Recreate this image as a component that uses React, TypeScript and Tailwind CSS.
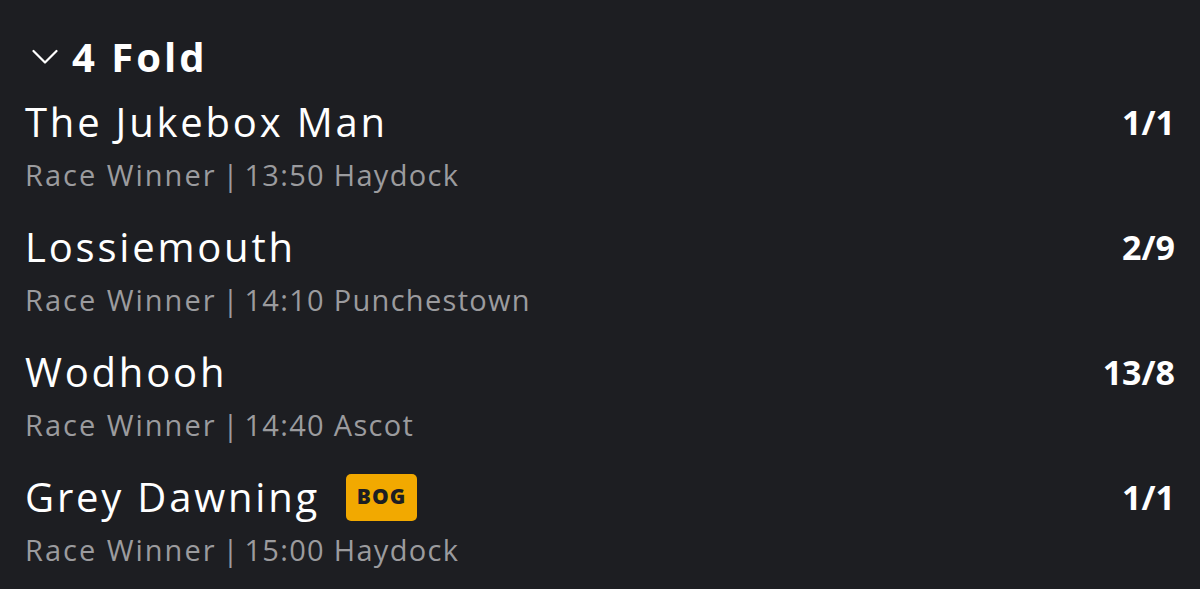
const legs = [
  { name: 'The Jukebox Man', market: 'Race Winner', event: '13:50 Haydock', odds: '1/1' },
  { name: 'Lossiemouth', market: 'Race Winner', event: '14:10 Punchestown', odds: '2/9' },
  { name: 'Wodhooh', market: 'Race Winner', event: '14:40 Ascot', odds: '13/8' },
  { name: 'Grey Dawning', market: 'Race Winner', event: '15:00 Haydock', odds: '1/1', bog: true },
];

function Chevron() {
  return (
    <svg width="26" height="16" viewBox="0 0 26 16" fill="none" className="shrink-0">
      <path d="M1.5 2 L13 13.5 L24.5 2" stroke="#ffffff" strokeWidth="2.2" strokeLinecap="round" strokeLinejoin="round" />
    </svg>
  );
}

export default function App() {
  return (
    <div
      className="w-[1200px] h-[589px] overflow-hidden bg-[#1d1e22] text-white pl-[25px] pr-[25px] pt-[32px]"
      style={{ fontFamily: '"Open Sans", "Liberation Sans", sans-serif' }}
    >
      <div className="flex items-center gap-[14px] h-[50px] pl-[7px]">
        <Chevron />
        <span className="text-[40px] font-bold leading-none tracking-[3px]">4 Fold</span>
      </div>

      <div className="flex flex-col">
        {legs.map((leg) => (
          <div key={leg.name} className="h-[125px] pt-[16px]">
            <div className="flex items-center justify-between h-[48px]">
              <div className="flex items-center gap-[26px]">
                <span className="text-[40px] leading-none tracking-[2.8px]">{leg.name}</span>
                {leg.bog && (
                  <span className="bg-[#f2a900] text-[#1d1e22] text-[21px] font-extrabold tracking-[1px] rounded-[5px] w-[71px] h-[47px] flex items-center justify-center">
                    BOG
                  </span>
                )}
              </div>
              <span className="text-[34px] font-bold leading-none">{leg.odds}</span>
            </div>
            <div className="mt-[14px] flex items-center text-[29px] leading-none text-[#9b9b9e]">
              <span className="tracking-[2px]">{leg.market}</span>
              <span className="ml-[6px] mr-[6px]">|</span>
              <span className="tracking-[1.3px]">{leg.event}</span>
            </div>
          </div>
        ))}
      </div>
    </div>
  );
}
